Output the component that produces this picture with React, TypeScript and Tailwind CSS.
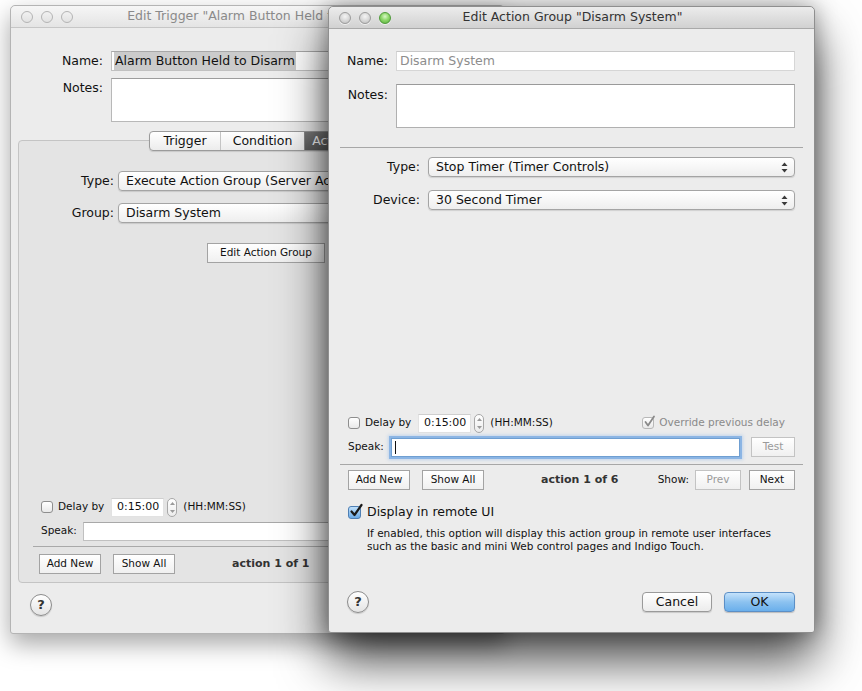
import React from 'react';

function TrafficLight({ kind }: { kind: 'gray' | 'green' | 'hollow' }) {
  if (kind === 'green') {
    return (
      <span className="block h-[12px] w-[12px] rounded-full border border-[#4f9a3a] bg-[radial-gradient(circle_at_50%_35%,#d9f7c8_0%,#8fd86b_45%,#56b03a_100%)] shadow-[0_1px_0_rgba(255,255,255,0.6)]" />
    );
  }
  if (kind === 'gray') {
    return (
      <span className="block h-[12px] w-[12px] rounded-full border border-[#9c9c9c] bg-[radial-gradient(circle_at_50%_35%,#f4f4f4_0%,#d6d6d6_55%,#bdbdbd_100%)] shadow-[0_1px_0_rgba(255,255,255,0.6)]" />
    );
  }
  return (
    <span className="block h-[12px] w-[12px] rounded-full border border-[#b4b4b4] bg-gradient-to-b from-[#f1f1f1] to-[#e2e2e2]" />
  );
}

function TitleBar({ title, active }: { title: string; active: boolean }) {
  return (
    <div
      className={
        active
          ? 'relative flex h-[22px] shrink-0 items-center rounded-t-[5px] border-b border-[#a9a9a9] bg-gradient-to-b from-[#ececec] to-[#d1d1d1]'
          : 'relative flex h-[22px] shrink-0 items-center rounded-t-[5px] border-b border-[#c6c6c6] bg-gradient-to-b from-[#f6f6f6] to-[#e4e4e4]'
      }
    >
      <div className="flex items-center gap-[8px] pl-[10px]">
        <TrafficLight kind={active ? 'gray' : 'hollow'} />
        <TrafficLight kind={active ? 'gray' : 'hollow'} />
        <TrafficLight kind={active ? 'green' : 'hollow'} />
      </div>
      <div
        className={
          active
            ? 'flex-1 pr-[60px] text-center text-[12.5px] whitespace-nowrap text-[#333]'
            : 'flex-1 pr-[56px] text-center text-[12.5px] whitespace-nowrap text-[#8a8a8a]'
        }
      >
        {title}
      </div>
    </div>
  );
}

function PopupArrows() {
  return (
    <svg width="7" height="11" viewBox="0 0 7 11" className="shrink-0">
      <path d="M3.5 0.5 L6.5 4 L0.5 4 Z" fill="#3a3a3a" />
      <path d="M3.5 10.5 L6.5 7 L0.5 7 Z" fill="#3a3a3a" />
    </svg>
  );
}

function Popup({ value }: { value: string }) {
  return (
    <div className="flex h-[20px] flex-1 items-center justify-between rounded-[4px] border border-[#a4a4a4] bg-gradient-to-b from-white to-[#eeeeee] pr-[6px] pl-[7px] text-[12.5px] text-[#111] shadow-[0_1px_1px_rgba(0,0,0,0.12)]">
      <span className="whitespace-nowrap">{value}</span>
      <PopupArrows />
    </div>
  );
}

function SquareButton({ label, w, disabled }: { label: string; w: string; disabled?: boolean }) {
  return (
    <div
      className={`flex h-[20px] shrink-0 items-center justify-center border bg-gradient-to-b from-white to-[#f0f0f0] text-[10.5px] whitespace-nowrap ${w} ${
        disabled ? 'border-[#c3c3c3] text-[#9a9a9a]' : 'border-[#a3a3a3] text-[#111]'
      }`}
    >
      {label}
    </div>
  );
}

function Checkbox({ checked, disabled, blue }: { checked?: boolean; disabled?: boolean; blue?: boolean }) {
  if (blue) {
    return (
      <span className="relative block h-[13px] w-[13px] shrink-0 rounded-[3px] border border-[#4e7fb4] bg-gradient-to-b from-[#bfe0fb] to-[#6aaae6]">
        <svg width="15" height="15" viewBox="0 0 15 15" className="absolute -top-[4px] left-[0px]">
          <path d="M2.5 8.5 L5.5 12 L12.5 2" stroke="#1a1a1a" strokeWidth="2.2" fill="none" strokeLinecap="round" strokeLinejoin="round" />
        </svg>
      </span>
    );
  }
  return (
    <span
      className={`relative block h-[12px] w-[12px] shrink-0 rounded-[3px] border bg-gradient-to-b from-white to-[#e9e9e9] ${
        disabled ? 'border-[#b8b8b8]' : 'border-[#8e8e8e]'
      }`}
    >
      {checked && (
        <svg width="13" height="13" viewBox="0 0 13 13" className="absolute -top-[3px] left-[0px]">
          <path d="M2.5 7 L5 10.5 L11 1.5" stroke="#8a8a8a" strokeWidth="1.8" fill="none" strokeLinecap="round" strokeLinejoin="round" />
        </svg>
      )}
    </span>
  );
}

function Stepper() {
  return (
    <span className="flex h-[19px] w-[10px] shrink-0 flex-col items-center justify-between rounded-full border border-[#a8a8a8] bg-gradient-to-b from-white to-[#ececec] py-[3px]">
      <svg width="5" height="3" viewBox="0 0 5 3">
        <path d="M2.5 0 L5 3 L0 3 Z" fill="#9a9a9a" />
      </svg>
      <svg width="5" height="3" viewBox="0 0 5 3">
        <path d="M2.5 3 L5 0 L0 0 Z" fill="#9a9a9a" />
      </svg>
    </span>
  );
}

function DelayRow({ override }: { override?: boolean }) {
  return (
    <div className="flex h-[20px] items-center text-[10.5px] text-[#111]">
      <Checkbox />
      <span className="ml-[5px] whitespace-nowrap">Delay by</span>
      <div className="ml-[7px] flex h-[19px] w-[53px] items-center justify-end border border-[#e2e2e2] border-t-[#cfcfcf] bg-white pr-[4px] text-[11px]">
        0:15:00
      </div>
      <span className="ml-[3px]">
        <Stepper />
      </span>
      <span className="ml-[6px] whitespace-nowrap">(HH:MM:SS)</span>
      {override && (
        <div className="mr-[29px] ml-auto flex items-center text-[#8a8a8a]">
          <Checkbox checked disabled />
          <span className="ml-[5px] text-[10.5px] whitespace-nowrap">Override previous delay</span>
        </div>
      )}
    </div>
  );
}

function HelpButton() {
  return (
    <div className="flex h-[22px] w-[22px] shrink-0 items-center justify-center rounded-full border border-[#8c8c8c] bg-gradient-to-b from-white to-[#e4e4e4] text-[13px] font-bold text-[#333] shadow-[0_1px_1px_rgba(0,0,0,0.15)]">
      ?
    </div>
  );
}

function BackWindow() {
  return (
    <div className="absolute top-[5px] left-[10px] isolate z-0 flex h-[629px] w-[495px] flex-col rounded-t-[5px] rounded-b-[3px] border border-[#b4b4b4] bg-[#ececec] shadow-[0_10px_24px_rgba(0,0,0,0.35)]">
      <TitleBar title={'Edit Trigger "Alarm Button Held to Disarm"'} active={false} />

      {/* Name / Notes */}
      <div className="flex items-center pt-[23px] pr-[12px]">
        <span className="w-[92px] text-right text-[12.5px] text-[#111]">Name:</span>
        <div className="ml-[8px] flex h-[20px] flex-1 items-center border border-[#c0c0c0] border-t-[#a8a8a8] bg-white pl-[2px] text-[12.5px] text-[#111]">
          <span className="bg-[#cbcbcb] px-[1px] whitespace-nowrap">Alarm Button Held to Disarm</span>
        </div>
      </div>
      <div className="mt-[7px] flex pr-[12px]">
        <span className="w-[92px] pt-[1px] text-right text-[12.5px] text-[#111]">Notes:</span>
        <div className="ml-[8px] h-[44px] flex-1 border border-[#b8b8b8] border-t-[#9c9c9c] bg-white" />
      </div>

      {/* Tabs */}
      <div className="relative z-10 mt-[9px] flex justify-center">
        <div className="flex h-[20px] overflow-hidden rounded-[4px] border border-[#9b9b9b] bg-gradient-to-b from-white to-[#ececec] text-[12.5px] text-[#111] shadow-[0_1px_1px_rgba(0,0,0,0.12)]">
          <div className="flex w-[71px] items-center justify-center border-r border-[#c4c4c4]">Trigger</div>
          <div className="flex w-[84px] items-center justify-center border-r border-[#8a8a8a]">Condition</div>
          <div className="flex w-[60px] items-center justify-center bg-gradient-to-b from-[#7a7a7a] to-[#5d5d5d] text-white">
            Actions
          </div>
        </div>
      </div>

      {/* Tab panel */}
      <div className="mx-[7px] -mt-[11px] flex h-[443px] flex-col rounded-[4px] border border-[#c4c4c4] bg-[#e4e4e4]">
        <div className="flex items-center pt-[30px] pr-[12px]">
          <span className="w-[95px] text-right text-[12.5px] text-[#111]">Type:</span>
          <div className="ml-[4px] flex flex-1">
            <Popup value="Execute Action Group (Server Actions)" />
          </div>
        </div>
        <div className="mt-[12px] flex items-center pr-[12px]">
          <span className="w-[95px] text-right text-[12.5px] text-[#111]">Group:</span>
          <div className="ml-[4px] flex flex-1">
            <Popup value="Disarm System" />
          </div>
        </div>
        <div className="mt-[20px] ml-[188px] flex">
          <SquareButton label="Edit Action Group" w="w-[118px]" />
        </div>

        <div className="flex-1" />

        <div className="pl-[22px]">
          <DelayRow />
        </div>
        <div className="mt-[4px] flex h-[20px] items-center pr-[12px] pl-[22px]">
          <span className="w-[42px] text-[10.5px] text-[#111]">Speak:</span>
          <div className="h-[19px] flex-1 border border-[#c0c0c0] border-t-[#a8a8a8] bg-white" />
        </div>
        <div className="mx-[14px] mt-[5px] h-px bg-[#a9a9a9]" />
        <div className="mt-[7px] flex items-center pl-[20px]">
          <SquareButton label="Add New" w="w-[62px]" />
          <span className="ml-[12px]">
            <SquareButton label="Show All" w="w-[62px]" />
          </span>
          <span className="ml-[57px] text-[11px] font-bold whitespace-nowrap text-[#333]">action 1 of 1</span>
        </div>
        <div className="h-[8px]" />
      </div>

      <div className="mt-[11px] pl-[19px]">
        <HelpButton />
      </div>
    </div>
  );
}

function FrontWindow() {
  return (
    <div className="absolute top-[6px] left-[328px] z-10 flex h-[627px] w-[487px] flex-col rounded-t-[5px] rounded-b-[3px] border border-[#8f8f8f] bg-[#ececec] shadow-[0_28px_50px_rgba(0,0,0,0.7),0_0_22px_rgba(0,0,0,0.35)]">
      <TitleBar title={'Edit Action Group "Disarm System"'} active />

      {/* Name / Notes */}
      <div className="flex items-center pt-[22px] pr-[19px]">
        <span className="w-[59px] text-right text-[12.5px] text-[#111]">Name:</span>
        <div className="ml-[8px] flex h-[20px] flex-1 items-center border border-[#d6d6d6] border-t-[#c8c8c8] bg-white pl-[3px] text-[12.5px] whitespace-nowrap text-[#8d8d8d]">
          Disarm System
        </div>
      </div>
      <div className="mt-[13px] flex pr-[19px]">
        <span className="w-[59px] pt-[2px] text-right text-[12.5px] text-[#111]">Notes:</span>
        <div className="ml-[8px] h-[44px] flex-1 border border-[#b0b0b0] border-t-[#9a9a9a] bg-white" />
      </div>

      <div className="mx-[11px] mt-[19px] h-px bg-[#a7a7a7]" />

      {/* Type / Device */}
      <div className="mt-[9px] flex items-center pr-[19px]">
        <span className="w-[91px] text-right text-[12.5px] text-[#111]">Type:</span>
        <div className="ml-[8px] flex flex-1">
          <Popup value="Stop Timer (Timer Controls)" />
        </div>
      </div>
      <div className="mt-[13px] flex items-center pr-[19px]">
        <span className="w-[91px] text-right text-[12.5px] text-[#111]">Device:</span>
        <div className="ml-[8px] flex flex-1">
          <Popup value="30 Second Timer" />
        </div>
      </div>

      <div className="flex-1" />

      {/* Delay / Speak */}
      <div className="pl-[19px]">
        <DelayRow override />
      </div>
      <div className="mt-[4px] flex h-[20px] items-center pr-[19px] pl-[19px]">
        <span className="w-[43px] text-[10.5px] text-[#111]">Speak:</span>
        <div className="flex h-[19px] flex-1 items-center border border-[#6f9fd2] bg-white pl-[3px] shadow-[0_0_0_2px_rgba(120,170,225,0.75),0_0_3px_3px_rgba(140,185,235,0.45)]">
          <span className="block h-[13px] w-px bg-[#111]" />
        </div>
        <span className="ml-[11px]">
          <SquareButton label="Test" w="w-[44px]" disabled />
        </span>
      </div>
      <div className="mx-[11px] mt-[7px] h-px bg-[#a7a7a7]" />

      {/* Actions nav */}
      <div className="mt-[5px] flex items-center pr-[19px] pl-[19px]">
        <SquareButton label="Add New" w="w-[62px]" />
        <span className="ml-[12px]">
          <SquareButton label="Show All" w="w-[62px]" />
        </span>
        <span className="ml-[57px] text-[11px] font-bold whitespace-nowrap text-[#333]">action 1 of 6</span>
        <span className="ml-auto text-[10.5px] text-[#111]">Show:</span>
        <span className="ml-[6px]">
          <SquareButton label="Prev" w="w-[46px]" disabled />
        </span>
        <span className="ml-[8px]">
          <SquareButton label="Next" w="w-[46px]" />
        </span>
      </div>

      {/* Remote UI */}
      <div className="mt-[15px] flex h-[14px] items-center pl-[19px]">
        <Checkbox blue />
        <span className="ml-[6px] text-[12.5px] whitespace-nowrap text-[#111]">Display in remote UI</span>
      </div>
      <div className="mt-[8px] h-[26px] pl-[38px] text-[10.5px] leading-[13px] text-[#111]">
        <div>If enabled, this option will display this action group in remote user interfaces</div>
        <div>such as the basic and mini Web control pages and Indigo Touch.</div>
      </div>

      {/* Bottom buttons */}
      <div className="mt-[39px] mb-[20px] flex h-[20px] items-center pr-[19px] pl-[18px]">
        <HelpButton />
        <div className="ml-auto flex h-[20px] w-[70px] items-center justify-center rounded-[4px] border border-[#9a9a9a] bg-gradient-to-b from-white to-[#ececec] text-[12.5px] text-[#111] shadow-[0_1px_1px_rgba(0,0,0,0.15)]">
          Cancel
        </div>
        <div className="ml-[12px] flex h-[20px] w-[71px] items-center justify-center rounded-[4px] border border-[#5c8fc6] bg-gradient-to-b from-[#c4e2fb] via-[#8cc2f0] to-[#6aafeb] text-[12.5px] text-[#111] shadow-[0_1px_1px_rgba(0,0,0,0.2)]">
          OK
        </div>
      </div>
    </div>
  );
}

export default function App() {
  return (
    <div className="relative h-[691px] w-[862px] overflow-hidden bg-white [font-family:'DejaVu_Sans',sans-serif]">
      <BackWindow />
      <FrontWindow />
    </div>
  );
}
